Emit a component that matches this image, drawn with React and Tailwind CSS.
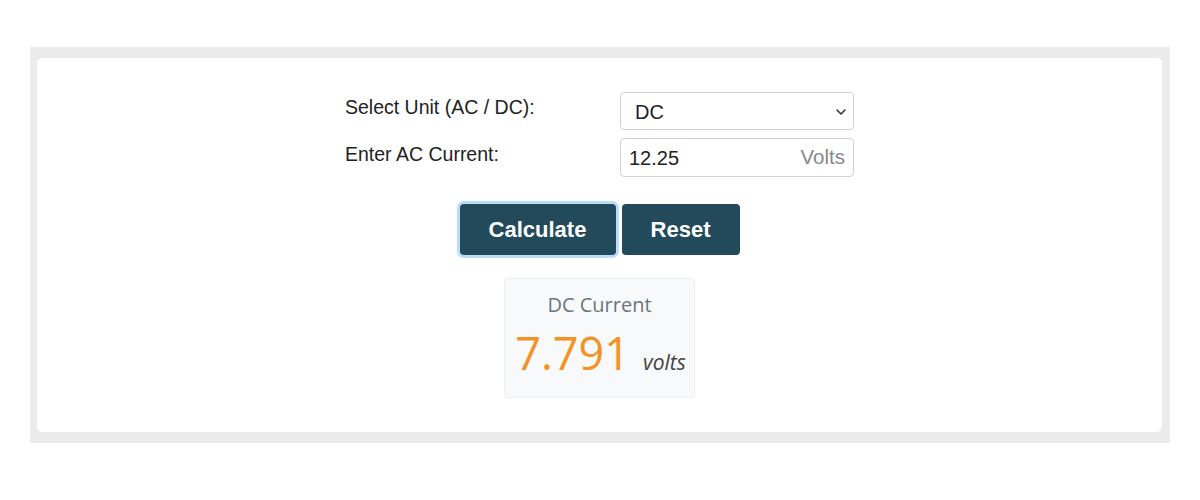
export default function App() {
  return (
    <div className="w-[1200px] h-[500px] bg-white pt-[47px] px-[30px]">
      <div className="bg-[#ebebeb] pt-[11px] pb-[11px] pl-[7px] pr-[8px]">
        <div className="bg-white rounded-[5px] h-[374px] pt-[34px] flex flex-col items-center">
          {/* form rows */}
          <div className="w-[509px] flex flex-col gap-[8px] font-['Liberation_Sans',Arial,sans-serif]">
            <div className="flex items-center">
              <label className="w-[275px] text-[19.5px] text-[#222] -mt-[6px]">Select Unit (AC / DC):</label>
              <div className="relative w-[234px] h-[38px] border border-[#ced4da] rounded-[4px] bg-white flex items-center px-[14px]">
                <span className="text-[20px] text-[#222] mt-[2px]">DC</span>
                <svg className="absolute right-[6px] top-[14px]" width="12" height="10" viewBox="0 0 12 10" fill="none">
                  <path d="M2 3l4 4 4-4" stroke="#333" strokeWidth="1.6" strokeLinecap="round" strokeLinejoin="round" />
                </svg>
              </div>
            </div>
            <div className="flex items-center">
              <label className="w-[275px] text-[19.5px] text-[#222] -mt-[6px]">Enter AC Current:</label>
              <div className="w-[234px] h-[39px] border border-[#ced4da] rounded-[4px] bg-white flex items-center justify-between pl-[8px] pr-[8px]">
                <span className="text-[20px] text-[#222] mt-[1px]">12.25</span>
                <span className="text-[20.5px] text-[#888] -mt-[1px]">Volts</span>
              </div>
            </div>
          </div>

          {/* buttons */}
          <div className="flex gap-[6px] mt-[27px] font-['Liberation_Sans',Arial,sans-serif]">
            <button className="w-[156px] h-[51px] rounded-[4px] bg-[#234a5a] text-white font-bold text-[22px] shadow-[0_0_0_3px_#bcdcfb]">
              Calculate
            </button>
            <button className="w-[118px] h-[51px] rounded-[4px] bg-[#234a5a] text-white font-bold text-[22px]">
              Reset
            </button>
          </div>

          {/* result */}
          <div className="mt-[23px] w-[191px] h-[120px] bg-[#f8f9fa] border border-[#eceef0] rounded-[4px] flex flex-col items-center font-['Open_Sans',sans-serif]">
            <div className="text-[20px] text-[#6c757d] mt-[11px]">DC Current</div>
            <div className="flex items-baseline mt-[1px] ml-[2px]">
              <span className="text-[45px] text-[#f39323] leading-[64px]">7.791</span>
              <span className="text-[21px] italic text-[#444] ml-[13px]">volts</span>
            </div>
          </div>
        </div>
      </div>
    </div>
  );
}
